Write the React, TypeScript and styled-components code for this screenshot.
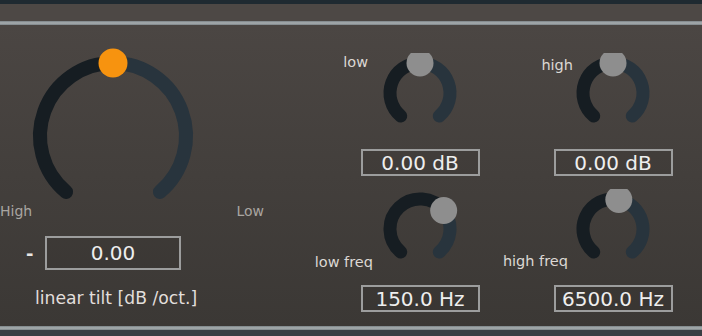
import React from 'react';
import styled, { createGlobalStyle } from 'styled-components';

const GlobalStyle = createGlobalStyle`
  html, body {
    margin: 0;
    padding: 0;
    background: #3a4045;
  }
  body {
    font-family: "DejaVu Sans", Verdana, sans-serif;
  }
`;

const Frame = styled.div`
  width: 702px;
  height: 336px;
  display: flex;
  flex-direction: column;
  overflow: hidden;
`;

const TopStrip = styled.div`
  height: 4px;
  background: #1f2a31;
`;

const HeaderBand = styled.div`
  height: 17px;
  background: #4d4845;
`;

const Divider = styled.div`
  height: 4px;
  background: linear-gradient(#7a8286, #a9afb1 50%, #7c8488);
`;

const Panel = styled.div`
  height: 301px;
  display: flex;
  align-items: flex-start;
  background: linear-gradient(#4b4643, #3b3835);
`;

const BottomStrip = styled.div`
  flex: 1;
  background: #393e43;
`;

const TiltColumn = styled.div`
  width: 290px;
  display: flex;
  flex-direction: column;
  padding-top: 16px;
`;

const BigKnobSvg = styled.svg`
  display: block;
  margin-left: 23px;
`;

const RangeLabels = styled.div`
  width: 264px;
  height: 18px;
  display: flex;
  justify-content: space-between;
  align-items: center;
  font-size: 14px;
  color: #a9a5a1;
`;

const ValueRow = styled.div`
  display: flex;
  align-items: center;
  gap: 9px;
  margin-top: 16px;
  padding-left: 26px;
`;

const Sign = styled.span`
  font-size: 18px;
  font-weight: bold;
  color: #e8e6e4;
  width: 10px;
`;

const ValueBox = styled.div<{ $w: number; $h: number }>`
  width: ${p => p.$w}px;
  height: ${p => p.$h}px;
  box-sizing: border-box;
  border: 2px solid #9c9d9d;
  display: flex;
  align-items: center;
  justify-content: center;
  font-size: 20px;
  color: #eeeeee;
  background: rgba(0, 0, 0, 0.04);
`;

const Caption = styled.div`
  margin-top: 18px;
  padding-left: 35px;
  font-size: 17.2px;
  color: #e2dfdc;
`;

const KnobGrid = styled.div`
  margin-left: 70px;
  padding-top: 28px;
  display: grid;
  grid-template-columns: 120px 120px;
  align-content: start;
  column-gap: 73px;
  row-gap: 13px;
`;

const KnobCell = styled.div`
  display: flex;
  flex-direction: column;
  align-items: center;
  gap: 16px;
`;

const KnobWrap = styled.div`
  position: relative;
  width: 80px;
  height: 80px;
`;

const KnobLabel = styled.span<{ $gap: number; $top?: number; $bottom?: number }>`
  position: absolute;
  right: calc(100% + ${p => p.$gap}px);
  ${p => (p.$top !== undefined ? `top: ${p.$top}px;` : '')}
  ${p => (p.$bottom !== undefined ? `bottom: ${p.$bottom}px;` : '')}
  white-space: nowrap;
  font-size: 14.5px;
  color: #dcd8d4;
`;

const SWEEP = 140;

const pt = (cx: number, cy: number, r: number, a: number) => {
  const rad = (a * Math.PI) / 180;
  return [cx + r * Math.sin(rad), cy - r * Math.cos(rad)];
};

const arc = (cx: number, cy: number, r: number, a0: number, a1: number) => {
  const [x0, y0] = pt(cx, cy, r, a0);
  const [x1, y1] = pt(cx, cy, r, a1);
  const large = a1 - a0 > 180 ? 1 : 0;
  return `M ${x0} ${y0} A ${r} ${r} 0 ${large} 1 ${x1} ${y1}`;
};

type DialProps = {
  w: number;
  h: number;
  cx: number;
  cy: number;
  r: number;
  stroke: number;
  dot: number;
  dotColor: string;
  value: number;
};

const Dial: React.FC<DialProps> = ({ w, h, cx, cy, r, stroke, dot, dotColor, value }) => {
  const a = -SWEEP + value * SWEEP * 2;
  const [dx, dy] = pt(cx, cy, r, a);
  return (
    <svg width={w} height={h} viewBox={`0 0 ${w} ${h}`} style={{ display: 'block' }}>
      <path d={arc(cx, cy, r, a, SWEEP)} stroke="#28343d" strokeWidth={stroke} fill="none" strokeLinecap="round" />
      <path d={arc(cx, cy, r, -SWEEP, a)} stroke="#161d22" strokeWidth={stroke} fill="none" strokeLinecap="round" />
      <circle cx={dx} cy={dy} r={dot} fill={dotColor} />
    </svg>
  );
};

const BigKnob: React.FC = () => {
  const a = 0;
  const [dx, dy] = pt(90, 95, 73, a);
  return (
    <BigKnobSvg width={180} height={161} viewBox="0 0 180 161">
      <path d={arc(90, 95, 73, a, SWEEP)} stroke="#28343d" strokeWidth={14} fill="none" strokeLinecap="round" />
      <path d={arc(90, 95, 73, -SWEEP, a)} stroke="#161d22" strokeWidth={14} fill="none" strokeLinecap="round" />
      <circle cx={dx} cy={dy} r={14.5} fill="#f7930f" />
    </BigKnobSvg>
  );
};

type SmallKnobProps = {
  label: string;
  value: number;
  readout: string;
  gap: number;
  top?: number;
  bottom?: number;
};

const SmallKnob: React.FC<SmallKnobProps> = ({ label, value, readout, gap, top, bottom }) => (
  <KnobCell>
    <KnobWrap>
      <KnobLabel $gap={gap} $top={top} $bottom={bottom}>{label}</KnobLabel>
      <Dial w={80} h={80} cx={40} cy={40} r={30} stroke={13} dot={13.5} dotColor="#8e8e8e" value={value} />
    </KnobWrap>
    <ValueBox $w={119} $h={27}>{readout}</ValueBox>
  </KnobCell>
);

const App: React.FC = () => (
  <>
    <GlobalStyle />
    <Frame>
      <TopStrip />
      <HeaderBand />
      <Divider />
      <Panel>
        <TiltColumn>
          <BigKnob />
          <RangeLabels>
            <span>High</span>
            <span>Low</span>
          </RangeLabels>
          <ValueRow>
            <Sign>-</Sign>
            <ValueBox $w={136} $h={34}>0.00</ValueBox>
          </ValueRow>
          <Caption>linear tilt [dB /oct.]</Caption>
        </TiltColumn>
        <KnobGrid>
          <SmallKnob label="low" value={0.5} readout="0.00 dB" gap={12} top={1} />
          <SmallKnob label="high" value={0.5} readout="0.00 dB" gap={0} top={4} />
          <SmallKnob label="low freq" value={0.686} readout="150.0 Hz" gap={7} bottom={-1} />
          <SmallKnob label="high freq" value={0.54} readout="6500.0 Hz" gap={5} bottom={0} />
        </KnobGrid>
      </Panel>
      <Divider />
      <BottomStrip />
    </Frame>
  </>
);

export default App;
